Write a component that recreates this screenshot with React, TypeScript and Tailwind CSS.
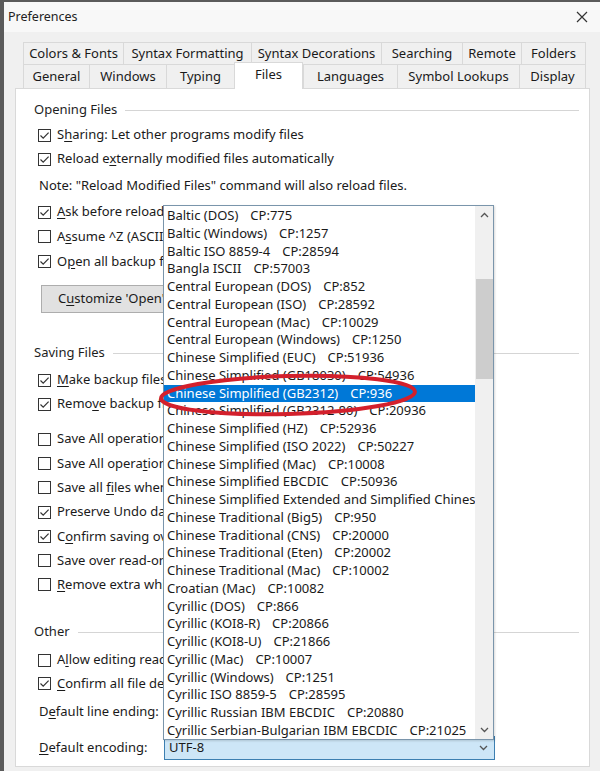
import React from "react"

const font = { fontFamily: '"Noto Sans", "Open Sans", Arial, sans-serif' }

// "&" marks the mnemonic letter that gets an underline
function Label({ text }: { text: string }) {
  const i = text.indexOf("&")
  if (i < 0) return <>{text}</>
  return (
    <>
      {text.slice(0, i)}
      <span className="underline underline-offset-2">{text[i + 1]}</span>
      {text.slice(i + 2)}
    </>
  )
}

function Check({ on }: { on: boolean }) {
  return (
    <span className="w-[13px] h-[13px] border border-[#333] bg-white flex items-center justify-center shrink-0">
      {on && (
        <svg width="11" height="11" viewBox="0 0 11 11">
          <path d="M1.5 5.5 L4.2 8.2 L9.6 2.6" fill="none" stroke="#333" strokeWidth="1.2" />
        </svg>
      )}
    </span>
  )
}

// rows that run under the open list are cut where the list begins
function Row({ on, text, cls = "" }: { on: boolean; text: string; cls?: string }) {
  return (
    <div className={"flex items-center gap-[6px] pl-[22px] whitespace-nowrap overflow-hidden " + cls}>
      <Check on={on} />
      <span>
        <Label text={text} />
      </span>
    </div>
  )
}

function Group({ title, cls = "" }: { title: string; cls?: string }) {
  return (
    <div className={"flex items-center gap-[8px] pl-[18px] pr-[10px] h-[20px] " + cls}>
      <span className="text-[#1e1e1e]">{title}</span>
      <div className="flex-1 h-px bg-[#d5d5d5]" />
    </div>
  )
}

const encodings: [string, string][] = [
  ["Baltic (DOS)", "CP:775"],
  ["Baltic (Windows)", "CP:1257"],
  ["Baltic ISO 8859-4", "CP:28594"],
  ["Bangla ISCII", "CP:57003"],
  ["Central European (DOS)", "CP:852"],
  ["Central European (ISO)", "CP:28592"],
  ["Central European (Mac)", "CP:10029"],
  ["Central European (Windows)", "CP:1250"],
  ["Chinese Simplified (EUC)", "CP:51936"],
  ["Chinese Simplified (GB18030)", "CP:54936"],
  ["Chinese Simplified (GB2312)", "CP:936"],
  ["Chinese Simplified (GB2312-80)", "CP:20936"],
  ["Chinese Simplified (HZ)", "CP:52936"],
  ["Chinese Simplified (ISO 2022)", "CP:50227"],
  ["Chinese Simplified (Mac)", "CP:10008"],
  ["Chinese Simplified EBCDIC", "CP:50936"],
  ["Chinese Simplified Extended and Simplified Chines", ""],
  ["Chinese Traditional (Big5)", "CP:950"],
  ["Chinese Traditional (CNS)", "CP:20000"],
  ["Chinese Traditional (Eten)", "CP:20002"],
  ["Chinese Traditional (Mac)", "CP:10002"],
  ["Croatian (Mac)", "CP:10082"],
  ["Cyrillic (DOS)", "CP:866"],
  ["Cyrillic (KOI8-R)", "CP:20866"],
  ["Cyrillic (KOI8-U)", "CP:21866"],
  ["Cyrillic (Mac)", "CP:10007"],
  ["Cyrillic (Windows)", "CP:1251"],
  ["Cyrillic ISO 8859-5", "CP:28595"],
  ["Cyrillic Russian IBM EBCDIC", "CP:20880"],
  ["Cyrillic Serbian-Bulgarian IBM EBCDIC", "CP:21025"],
]

const tabsTop = [
  ["Colors & Fonts", "w-[100px]"],
  ["Syntax Formatting", "w-[128px]"],
  ["Syntax Decorations", "w-[130px]"],
  ["Searching", "w-[81px]"],
  ["Remote", "w-[59px]"],
  ["Folders", "w-[65px]"],
]
const tabsBottom = [
  ["General", "w-[66px]"],
  ["Windows", "w-[77px]"],
  ["Typing", "w-[68px]"],
  ["Files", "w-[69px]"],
  ["Languages", "w-[94px]"],
  ["Symbol Lookups", "w-[122px]"],
  ["Display", "w-[67px]"],
]

function Chevron({ up = false }: { up?: boolean }) {
  return (
    <svg width="9" height="6" viewBox="0 0 9 6">
      <path d={up ? "M1 5 L4.5 1.5 L8 5" : "M1 1 L4.5 4.5 L8 1"} fill="none" stroke="#555" strokeWidth="1.3" />
    </svg>
  )
}

const cut = "w-[148px]"

export default function App() {
  return (
    <div
      className="w-[600px] h-[771px] relative overflow-hidden bg-[#f0f0f0] border-l-[4px] border-t-[2px] border-[#5b5b5b] text-[13px] text-[#1a1a1a] flex flex-col"
      style={font}
    >
      {/* title bar */}
      <div className="h-[30px] flex items-center justify-between pl-[4px] pr-[12px] bg-[#f8f8f8] shrink-0">
        <span className="text-[12.5px] text-[#222]">Preferences</span>
        <svg width="12" height="12" viewBox="0 0 12 12">
          <path d="M1 1 L11 11 M11 1 L1 11" stroke="#333" strokeWidth="1.2" />
        </svg>
      </div>

      {/* tabs */}
      <div className="pl-[19px] pt-[10px] shrink-0">
        <div className="flex h-[22px]">
          {tabsTop.map(([t, w]) => (
            <div key={t} className={"flex items-center justify-center whitespace-nowrap border border-r-0 last:border-r border-b-0 border-[#d9d9d9] bg-[#f0f0f0] " + w}>
              {t}
            </div>
          ))}
        </div>
        <div className="flex h-[24px] relative z-10">
          {tabsBottom.map(([t, w]) =>
            t === "Files" ? (
              <div key={t} className={"flex items-start justify-center pt-[2px] -mt-[2px] h-[27px] border border-b-0 border-[#d9d9d9] bg-white " + w}>
                {t}
              </div>
            ) : (
              <div key={t} className={"flex items-center justify-center whitespace-nowrap border border-r-0 last:border-r border-b-0 border-[#d9d9d9] bg-[#f0f0f0] " + w}>
                {t}
              </div>
            )
          )}
        </div>
      </div>

      {/* panel */}
      <div className="ml-[11px] w-[575px] flex-1 bg-white border border-[#d9d9d9] pt-[11px]">
        <Group title="Opening Files" />
        <Row on text="S&haring: Let other programs modify files" cls="h-[24px] mt-[3px]" />
        <Row on text="Reload e&xternally modified files automatically" cls="h-[24px]" />
        <div className="h-[24px] mt-[3px] pl-[23px] flex items-center">Note: "Reload Modified Files" command will also reload files.</div>
        <Row on text="&Ask before reloading modified files" cls={"h-[24px] mt-[2px] " + cut} />
        <Row on={false} text="A&ssume ^Z (ASCII 26) is end of file" cls={"h-[25px] " + cut} />
        <Row on text="O&pen all backup files in the project" cls={"h-[25px] " + cut} />
        <div className={"pl-[25px] mt-[11px] overflow-hidden " + cut}>
          <div className="w-[200px] h-[28px] bg-[#e1e1e1] border border-[#adadad] flex items-center pl-[16px] whitespace-nowrap">
            <Label text="C&ustomize 'Open' Dialog..." />
          </div>
        </div>
        <Group title="Saving Files" cls="mt-[30px]" />
        <Row on text="&Make backup files" cls={"h-[24px] mt-[5px] " + cut} />
        <Row on text="Remo&ve backup files when closing" cls={"h-[24px] " + cut} />
        <Row on={false} text="Save All operation saves all files" cls={"h-[24.3px] mt-[11px] " + cut} />
        <Row on={false} text="Save All opera&tion saves project files" cls={"h-[24.3px] " + cut} />
        <Row on={false} text="Save all &files when losing focus" cls={"h-[24.3px] " + cut} />
        <Row on text="Preserve Undo data after saving" cls={"h-[24.3px] " + cut} />
        <Row on text="C&onfirm saving over newer files" cls={"h-[24.3px] " + cut} />
        <Row on={false} text="Save over read-only files" cls={"h-[24.3px] " + cut} />
        <Row on={false} text="&Remove extra whitespace when saving" cls={"h-[24.3px] " + cut} />
        <Group title="Other" cls="mt-[25px]" />
        <Row on={false} text="A&llow editing read-only files" cls={"h-[24px] mt-[6px] " + cut} />
        <Row on text="&Confirm all file deletions" cls={"h-[23px] " + cut} />
        <div className="flex items-center h-[24px] mt-[5px] pl-[23px]">
          <span className="w-[125px] whitespace-nowrap">
            <Label text="D&efault line ending:" />
          </span>
        </div>
        <div className="flex items-center h-[24px] mt-[12px] pl-[23px]">
          <span className="w-[125px] whitespace-nowrap">
            <Label text="&Default encoding:" />
          </span>
          <div className="w-[331px] h-[24px] border border-[#3c7fb1] bg-[#cde6f7] flex items-center justify-between pl-[4px] pr-[6px]">
            <span>UTF-8</span>
            <Chevron />
          </div>
        </div>
      </div>
      <div className="h-[4px] shrink-0" />

      {/* dropdown list */}
      <div className="absolute left-[159px] top-[203px] w-[331px] h-[535px] bg-white border border-[#7a95ab] flex shadow-[1px_1px_2px_rgba(0,0,0,0.15)]">
        <div className="flex-1 pt-[1px] overflow-hidden">
          {encodings.map(([n, cp], i) => (
            <div
              key={n}
              className={
                "h-[17.75px] flex items-center pl-[3px] whitespace-nowrap overflow-hidden " +
                (i === 10 ? "bg-[#0078d7] text-white" : "")
              }
            >
              <span>{n}</span>
              {cp && <span className="ml-[12px]">{cp}</span>}
            </div>
          ))}
        </div>
        <div className="w-[18px] bg-[#f0f0f0] flex flex-col items-center shrink-0">
          <div className="h-[18px] flex items-center justify-center">
            <Chevron up />
          </div>
          <div className="mt-[55px] w-[17px] h-[100px] bg-[#cdcdcd]" />
          <div className="flex-1" />
          <div className="h-[18px] flex items-center justify-center">
            <Chevron />
          </div>
        </div>
      </div>

      {/* red annotation ellipse */}
      <svg className="absolute left-[150px] top-[368px]" width="272" height="50" viewBox="0 0 272 50">
        <ellipse cx="134" cy="25" rx="127" ry="19" fill="none" stroke="#d3202c" strokeWidth="4" transform="rotate(-1.5 134 25)" />
      </svg>
    </div>
  )
}
